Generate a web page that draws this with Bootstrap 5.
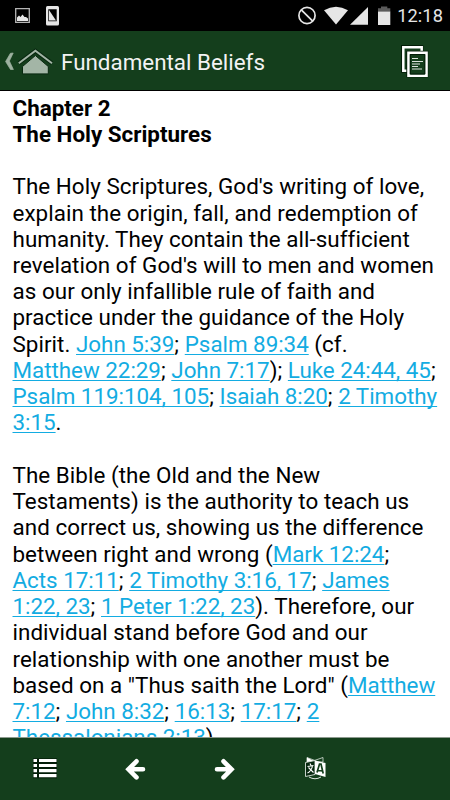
<!DOCTYPE html>
<html lang="en">
<head>
<meta charset="utf-8">
<meta name="viewport" content="width=device-width, initial-scale=1">
<title>Fundamental Beliefs</title>
<link href="https://cdn.jsdelivr.net/npm/bootstrap@5.3.0/dist/css/bootstrap.min.css" rel="stylesheet">
<style>
body{font-family:Roboto,"Liberation Sans",sans-serif;color:#000}
.screen{width:450px;height:800px}
.status{height:31px;background:#000;color:#e6e6e6}
.clock{font-size:18.2px;line-height:31px;letter-spacing:.1px;padding-right:7px}
.appbar{height:60px;background:#143e1c;border-bottom:1px solid #000}
.appbar h1{font-size:22.4px;line-height:62px;color:#f3f3f3}
.reader{padding:3.600px 0 0 12.5px;font-size:22.4px;line-height:26.24px;min-height:0}
.reader h2{font-size:22.4px;line-height:26.24px}
.reader p{margin-bottom:26.24px;letter-spacing:.05px}
.reader a{color:#13ace2;letter-spacing:-.025px;text-decoration-thickness:1.3px;text-underline-offset:2px;text-decoration-skip-ink:none}
.toolbar{height:63px;background:#143e1c;border-top:1px solid #8d9a8f}
.toolbar .cell{width:90px;padding-top:1px}
svg{display:block}
</style>
<script src="https://cdn.jsdelivr.net/npm/bootstrap@5.3.0/dist/js/bootstrap.bundle.min.js"></script>
</head>
<body class="m-0 bg-white">
<div class="screen d-flex flex-column overflow-hidden">
  <div class="status d-flex flex-shrink-0 justify-content-between">
    <svg width="64" height="31" viewBox="0 0 64 31">
      <path d="M15.7 8.7h13.6v13.6H15.7z" fill="none" stroke="#b5b5b5" stroke-width="1.3"/>
      <path d="M17 21v-3.5l2-2 1.5 1.5 2-2.500 2 2.500h1.500l2 1.500V21z" fill="#e6e6e6"/>
      <rect x="46" y="6" width="13" height="19.500" rx="1.500" fill="#e6e6e6"/>
      <path d="M48.300 9.300h8.400v12h-8.400z" fill="#000"/>
      <path d="M49 20.500V10l7 10.500z" fill="#e6e6e6"/>
    </svg>
    <div class="d-flex">
      <svg width="99" height="31" viewBox="298 0 99 31">
        <circle cx="307" cy="15.500" r="8.100" fill="none" stroke="#e6e6e6" stroke-width="1.700"/>
        <path d="M301.300 9.800l11.400 11.400" stroke="#e6e6e6" stroke-width="1.700"/>
        <path d="M324 10.300q12-7 24 0L336 24.500z" fill="#e6e6e6"/>
        <path d="M350 24.800L368 7v17.800z" fill="#e6e6e6"/>
        <path d="M378 11.300h12.300V25H378z" fill="#e6e6e6"/>
        <path d="M378 11.300V8.300h3V6.500h6.300v1.800h3v3z" fill="#5b5b5b"/>
      </svg>
      <div class="clock">12:18</div>
    </div>
  </div>
  <header class="appbar d-flex flex-shrink-0">
    <svg class="flex-shrink-0" width="61" height="59" viewBox="0 31 61 59">
      <path d="M13.200 53L10.400 53.300 5.600 61.500l4.900 8h2.900l-4-8.500z" fill="#9db1a0" stroke="#9db1a0" stroke-width=".7"/>
      <path d="M35.400 55.500L22.500 66.500v7.400h25.800v-7.400z" fill="#a3b5a6" stroke="#082810" stroke-width="1"/>
      <path d="M18.800 63.200L35.400 50.800l16.600 12.400" fill="none" stroke="#082810" stroke-width="4"/>
      <path d="M18.800 63.200L35.400 50.800l16.600 12.400" fill="none" stroke="#a3b5a6" stroke-width="2"/>
    </svg>
    <h1 class="fw-normal m-0 flex-grow-1 text-nowrap">Fundamental Beliefs</h1>
    <svg class="flex-shrink-0" width="60" height="59" viewBox="390 31 60 59">
      <path d="M402.900 46.900h18.500v24h-18.500z" fill="#143e1c" stroke="#031d08" stroke-width="3.800"/>
      <path d="M403.300 47.300h18.400v23.400h-18.400z" fill="#143e1c" stroke="#fff" stroke-width="2.500"/>
      <path d="M406.300 50.800h22v26.500h-22z" fill="#031d08"/>
      <path d="M408.500 52.700h18v23h-18z" fill="#143e1c" stroke="#fff" stroke-width="2.600"/>
      <path d="M410.300 54.500h14.500v19.500h-14.500z" fill="none" stroke="#031d08"/>
      <path d="M412 58.500h6M412 61.500h11M412 64h8M412 66.500h6M412 69h10" stroke="#dbe3dc" stroke-width="1.100"/>
    </svg>
  </header>
  <main class="reader flex-grow-1 overflow-hidden text-nowrap">
    <h2 class="fw-bold m-0">Chapter 2<br>The Holy Scriptures</h2>
    <br>
    <p>The Holy Scriptures, God's writing of love,<br>
    explain the origin, fall, and redemption of<br>
    humanity. They contain the all-sufficient<br>
    revelation of God's will to men and women<br>
    as our only infallible rule of faith and<br>
    practice under the guidance of the Holy<br>
    Spirit. <a href="#">John 5:39</a>; <a href="#">Psalm 89:34</a> (cf.<br>
    <a href="#">Matthew 22:29</a>; <a href="#">John 7:17</a>); <a href="#">Luke 24:44, 45</a>;<br>
    <a href="#">Psalm 119:104, 105</a>; <a href="#">Isaiah 8:20</a>; <a href="#">2 Timothy<br>
    3:15</a>.</p>
    <p>The Bible (the Old and the New<br>
    Testaments) is the authority to teach us<br>
    and correct us, showing us the difference<br>
    between right and wrong (<a href="#">Mark 12:24</a>;<br>
    <a href="#">Acts 17:11</a>; <a href="#">2 Timothy 3:16, 17</a>; <a href="#">James<br>
    1:22, 23</a>; <a href="#">1 Peter 1:22, 23</a>). Therefore, our<br>
    individual stand before God and our<br>
    relationship with one another must be<br>
    based on a "Thus saith the Lord" (<a href="#">Matthew<br>
    7:12</a>; <a href="#">John 8:32</a>; <a href="#">16:13</a>; <a href="#">17:17</a>; <a href="#">2<br>
    Thessalonians 2:13</a>)</p>
  </main>
  <nav class="toolbar d-flex flex-shrink-0">
    <div class="cell"><svg width="90" height="60" viewBox="0 739 90 60">
      <path d="M33 758.300h24v20H33z" fill="#031d08"/>
      <path d="M33.500 760.500H37M39 760.500h17.500M33.500 765.500H37M39 765.500h17.500M33.500 770.700H37M39 770.700h17.500M33.500 775.700H37M39 775.700h17.500" stroke="#fff" stroke-width="3.200"/>
    </svg></div>
    <div class="cell"><svg width="90" height="60" viewBox="90 739 90 60">
      <path d="M143 769.300h-14M136.500 761.300l-8 8 8 8" fill="none" stroke="#fff" stroke-width="4.600" stroke-linecap="round"/>
    </svg></div>
    <div class="cell"><svg width="90" height="60" viewBox="180 739 90 60">
      <path d="M217 769.300h14M223.500 761.300l8 8-8 8" fill="none" stroke="#fff" stroke-width="4.600" stroke-linecap="round"/>
    </svg></div>
    <div class="cell"><svg width="90" height="60" viewBox="270 739 90 60">
      <path d="M307 757.500l8 3-8 2zM323 757.500l-13 4.500h13z" fill="#143e1c" stroke="#dbe3dc" stroke-width=".8"/>
      <path d="M307 757.500l7 3.500-7 2z" fill="#fff"/>
      <path d="M305.500 762.500l9.500-2v14l-9.500 2z" fill="#082810" stroke="#dbe3dc" stroke-width=".9"/>
      <path d="M315 760.500l10.500 2.500v14L315 774z" fill="#fff"/>
      <path d="M307.500 766.500l6-1M310 763.500l1 2M312.500 766q-1 5-5 7M308.500 767.500l5 5" fill="none" stroke="#fff" stroke-width="1.100"/>
      <path d="M317 772.500l2.500-8.500h1.500l2.200 9.500M318 770.500l4.500.5" fill="none" stroke="#143e1c" stroke-width="1.700"/>
      <path d="M309 777q6 3.500 12 0" fill="none" stroke="#dbe3dc"/>
    </svg></div>
  </nav>
</div>
</body>
</html>
